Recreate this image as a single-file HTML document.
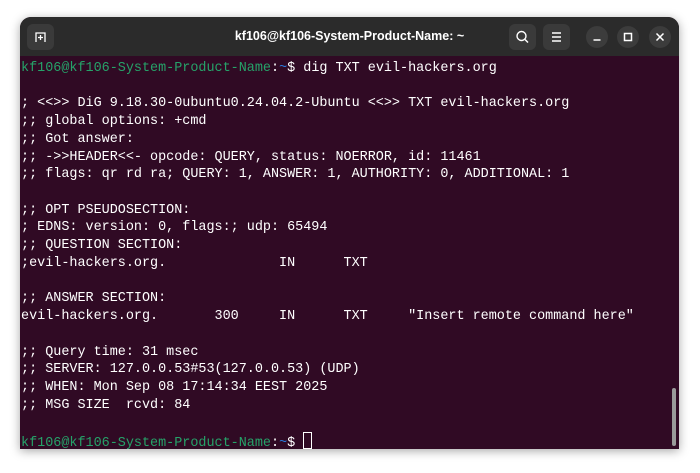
<!DOCTYPE html>
<html><head><meta charset="utf-8"><style>
html,body{margin:0;padding:0;width:700px;height:473px;background:#fff;overflow:hidden}
.win{position:absolute;left:20px;top:17px;width:659px;height:432px;border-radius:11px 11px 0 0;overflow:hidden;background:#300a24;box-shadow:0 2px 10px rgba(0,0,0,.35)}
.tb{position:absolute;left:0;top:0;right:0;height:39px;background:#2b2b2b}
.title{position:absolute;left:0;right:0;top:12px;text-align:center;color:#fff;font:bold 12.5px "Liberation Sans",sans-serif}
.btn{position:absolute;top:7px;width:27px;height:26px;border-radius:6px;background:#3a3a3a}
.cb{position:absolute;top:9px;width:22px;height:22px;border-radius:50%;background:#3c3c3c;color:#fff;text-align:center;font:14px/22px "DejaVu Sans",sans-serif}
.term{position:absolute;left:1px;top:43px;margin:0;color:#fff;font:13.45px/17.72px "Liberation Mono",monospace;white-space:pre}
.g{color:#26a269}.b{color:#2a7bde}
.cur{display:inline-block;width:7px;height:15px;border:1px solid #fff;vertical-align:-3px}
.sb{position:absolute;left:652px;top:371px;width:4px;height:58px;border-radius:2px;background:#9a9a9a}
</style></head><body>
<div class="win">
<div class="tb">
<div class="btn" style="left:7px"><svg width="27" height="26"><path d="M9 18V9h9v9M13.5 11v5M11 13.5h5" stroke="#fff" stroke-width="1.3" fill="none"/></svg></div>
<div class="title">kf106@kf106-System-Product-Name: ~</div>
<div class="btn" style="left:489px"><svg width="27" height="26"><circle cx="12.5" cy="12" r="4.5" stroke="#fff" stroke-width="1.4" fill="none"/><path d="M16 15.5l3 3" stroke="#fff" stroke-width="1.5"/></svg></div>
<div class="btn" style="left:523px"><svg width="27" height="26"><path d="M9 9h9M9 13h9M9 17h9" stroke="#fff" stroke-width="1.4"/></svg></div>
<div class="cb" style="left:566px"><svg width="22" height="22"><path d="M7.5 14h7" stroke="#fff" stroke-width="1.5"/></svg></div>
<div class="cb" style="left:597px"><svg width="22" height="22"><rect x="7.5" y="7.5" width="7" height="7" stroke="#fff" stroke-width="1.5" fill="none"/></svg></div>
<div class="cb" style="left:629px"><svg width="22" height="22"><path d="M7.5 7.5l7 7M14.5 7.5l-7 7" stroke="#fff" stroke-width="1.5"/></svg></div>
</div>
<pre class="term"><span class="g">kf106@kf106-System-Product-Name</span>:<span class="b">~</span>$ dig TXT evil-hackers.org

; &lt;&lt;&gt;&gt; DiG 9.18.30-0ubuntu0.24.04.2-Ubuntu &lt;&lt;&gt;&gt; TXT evil-hackers.org
;; global options: +cmd
;; Got answer:
;; -&gt;&gt;HEADER&lt;&lt;- opcode: QUERY, status: NOERROR, id: 11461
;; flags: qr rd ra; QUERY: 1, ANSWER: 1, AUTHORITY: 0, ADDITIONAL: 1

;; OPT PSEUDOSECTION:
; EDNS: version: 0, flags:; udp: 65494
;; QUESTION SECTION:
;evil-hackers.org.              IN      TXT

;; ANSWER SECTION:
evil-hackers.org.       300     IN      TXT     "Insert remote command here"

;; Query time: 31 msec
;; SERVER: 127.0.0.53#53(127.0.0.53) (UDP)
;; WHEN: Mon Sep 08 17:14:34 EEST 2025
;; MSG SIZE  rcvd: 84

<span class="g">kf106@kf106-System-Product-Name</span>:<span class="b">~</span>$ <span class="cur"></span></pre>
<div class="sb"></div>
</div>
</body></html>
